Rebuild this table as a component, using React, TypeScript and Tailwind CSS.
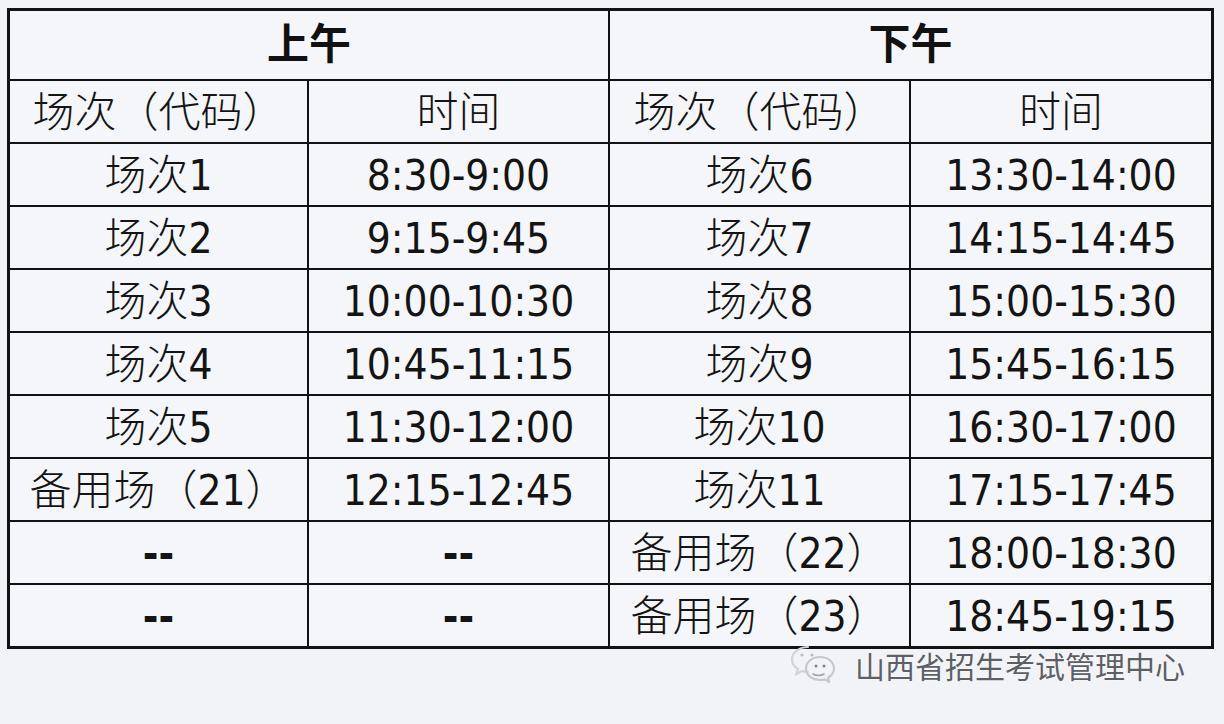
const font = "font-['DejaVu_Sans_Condensed','Noto_Sans_CJK_SC',sans-serif]";

const rows: [string, string, string, string][] = [
  ["场次1", "8:30-9:00", "场次6", "13:30-14:00"],
  ["场次2", "9:15-9:45", "场次7", "14:15-14:45"],
  ["场次3", "10:00-10:30", "场次8", "15:00-15:30"],
  ["场次4", "10:45-11:15", "场次9", "15:45-16:15"],
  ["场次5", "11:30-12:00", "场次10", "16:30-17:00"],
  ["备用场（21）", "12:15-12:45", "场次11", "17:15-17:45"],
  ["--", "--", "备用场（22）", "18:00-18:30"],
  ["--", "--", "备用场（23）", "18:45-19:15"],
];

function Cell({ children }: { children: React.ReactNode }) {
  const dash = children === "--";
  return (
    <div
      className={`flex h-[61px] items-center justify-center bg-[#f5f6f9] pt-[2px] text-[42px] leading-none text-[#141414] whitespace-nowrap ${
        dash ? "font-bold" : "font-light"
      }`}
    >
      {children}
    </div>
  );
}

function WeChatIcon() {
  return (
    <svg width="48" height="44" viewBox="0 0 48 44" fill="none">
      <path
        d="M19 4C10 4 3 9.5 3 16.5c0 4 2.3 7.4 6 9.7L7.5 31l5.5-3c1.8.5 3.8.8 6 .8"
        stroke="#d0d3d8"
        strokeWidth="2.2"
        strokeLinecap="round"
      />
      <path
        d="M31 14c-8 0-14 5-14 11.5S23 37 31 37c1.6 0 3.2-.2 4.6-.6l4.6 2.6-1.2-4.2C42.6 32.6 45 29.3 45 25.5 45 19 39 14 31 14z"
        stroke="#c5c8ce"
        strokeWidth="2.2"
        strokeLinejoin="round"
      />
      <circle cx="13" cy="12" r="1.6" fill="#b8bcc3" />
      <circle cx="23" cy="12" r="1.6" fill="#b8bcc3" />
      <circle cx="27" cy="23" r="1.5" fill="#7d8189" />
      <circle cx="35" cy="23" r="1.5" fill="#7d8189" />
      <path d="M24 31c3 2 8 2 11 0" stroke="#9ea2a9" strokeWidth="1.6" strokeLinecap="round" />
    </svg>
  );
}

export default function App() {
  return (
    <div className={`min-h-[724px] w-[1224px] bg-[#f1f3f6] pl-[7px] pt-[8px] ${font}`}>
      <div className="w-[1207px] border-[3px] border-[#121212]">
        <div className="grid grid-cols-[297px_299px_299px_1fr] gap-[2px] bg-[#121212]">
          <div className="col-span-2 flex h-[68px] items-center justify-center bg-[#f5f6f9] text-[42px] font-bold leading-none text-[#111]">
            上午
          </div>
          <div className="col-span-2 flex h-[68px] items-center justify-center bg-[#f5f6f9] text-[42px] font-bold leading-none text-[#111]">
            下午
          </div>
          <Cell>场次（代码）</Cell>
          <Cell>时间</Cell>
          <Cell>场次（代码）</Cell>
          <Cell>时间</Cell>
          {rows.map((r, i) => (
            <>
              <Cell key={`a${i}`}>{r[0]}</Cell>
              <Cell key={`b${i}`}>{r[1]}</Cell>
              <Cell key={`c${i}`}>{r[2]}</Cell>
              <Cell key={`d${i}`}>{r[3]}</Cell>
            </>
          ))}
        </div>
      </div>
      <div className="-mt-[6px] flex items-center justify-end gap-[18px] pr-[39px]">
        <WeChatIcon />
        <span className="text-[30px] leading-none text-[#5c5f66] font-['Noto_Sans_CJK_SC',sans-serif] [text-shadow:0_0_2px_#fff]">
          山西省招生考试管理中心
        </span>
      </div>
    </div>
  );
}
